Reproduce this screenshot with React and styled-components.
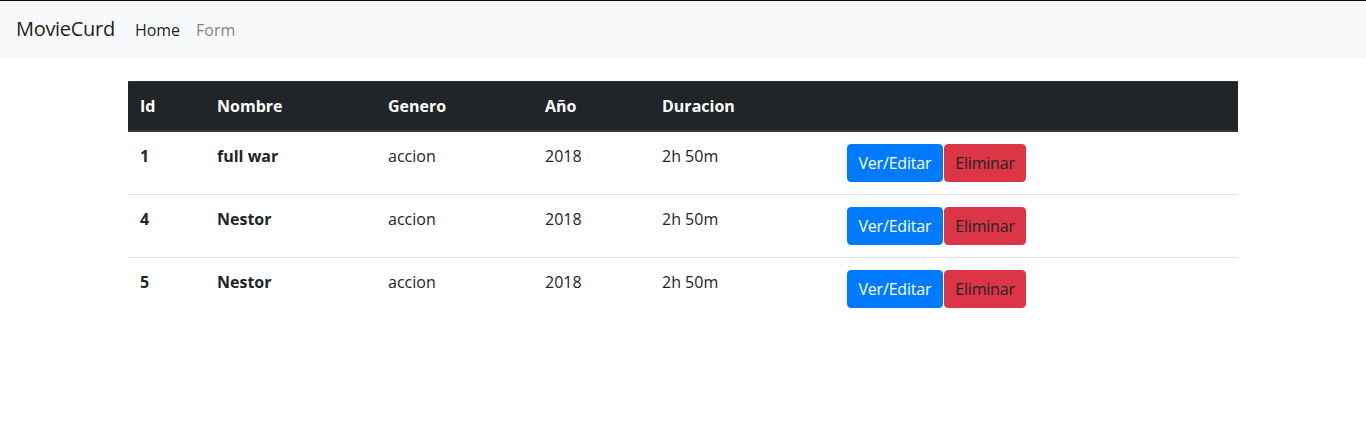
import React from 'react'
import styled, { createGlobalStyle } from 'styled-components'

const GlobalStyle = createGlobalStyle`
  body {
    margin: 0;
    font-family: "Open Sans", "Noto Sans", Arial, sans-serif;
    font-size: 16px;
    line-height: 1.5;
    color: #212529;
    background: #fff;
    border-top: 1px solid #140505;
  }
`;

const Navbar = styled.nav`
  display: flex;
  align-items: center;
  padding: 8px 16px;
  background: #f8f9fa;
`;

const Brand = styled.a`
  font-size: 20px;
  line-height: 30px;
  padding: 5px 0;
  margin-right: 12px;
  color: rgba(0, 0, 0, 0.9);
  text-decoration: none;
  letter-spacing: -0.3px;
`;

const NavLink = styled.a`
  padding: 9px 8px 7px;
  color: ${p => (p.$active ? 'rgba(0,0,0,0.9)' : 'rgba(0,0,0,0.5)')};
  text-decoration: none;
`;

const Container = styled.div`
  width: 1110px;
  margin: 24px auto 0;
`;

const Table = styled.table`
  width: 100%;
  border-collapse: collapse;
  table-layout: fixed;
`;

const Th = styled.th`
  box-sizing: border-box;
  text-align: left;
  padding: 12px;
  vertical-align: bottom;
  color: #fff;
  background: #212529;
  border-top: 1px solid #32383e;
  border-bottom: 2px solid #32383e;
  width: ${p => p.$w || 'auto'};
`;

const Td = styled.td`
  padding: 12px;
  vertical-align: top;
  border-top: 1px solid #dee2e6;
  font-weight: ${p => (p.$bold ? 700 : 400)};
`;

const Button = styled.button`
  font-family: inherit;
  font-size: 16px;
  line-height: 24px;
  padding: 6px 10.5px;
  border: 1px solid ${p => (p.$danger ? '#dc3545' : '#007bff')};
  border-radius: 4px;
  background: ${p => (p.$danger ? '#dc3545' : '#007bff')};
  color: ${p => (p.$danger ? '#212529' : '#fff')};
  margin-right: 1px;
  letter-spacing: -0.2px;
  cursor: pointer;
`;

const movies = [
  { id: 1, nombre: 'full war', genero: 'accion', anio: 2018, duracion: '2h 50m' },
  { id: 4, nombre: 'Nestor', genero: 'accion', anio: 2018, duracion: '2h 50m' },
  { id: 5, nombre: 'Nestor', genero: 'accion', anio: 2018, duracion: '2h 50m' },
];

export default function App() {
  return (
    <>
      <GlobalStyle />
      <Navbar>
        <Brand href="#">MovieCurd</Brand>
        <NavLink $active href="#">Home</NavLink>
        <NavLink href="#">Form</NavLink>
      </Navbar>
      <Container>
        <Table>
          <thead>
            <tr>
              <Th $w="77px">Id</Th>
              <Th $w="171px">Nombre</Th>
              <Th $w="157px">Genero</Th>
              <Th $w="117px">Año</Th>
              <Th $w="185px">Duracion</Th>
              <Th></Th>
            </tr>
          </thead>
          <tbody>
            {movies.map(m => (
              <tr key={m.id}>
                <Td $bold>{m.id}</Td>
                <Td $bold>{m.nombre}</Td>
                <Td>{m.genero}</Td>
                <Td>{m.anio}</Td>
                <Td>{m.duracion}</Td>
                <Td>
                  <Button>Ver/Editar</Button>
                  <Button $danger>Eliminar</Button>
                </Td>
              </tr>
            ))}
          </tbody>
        </Table>
      </Container>
    </>
  )
}
